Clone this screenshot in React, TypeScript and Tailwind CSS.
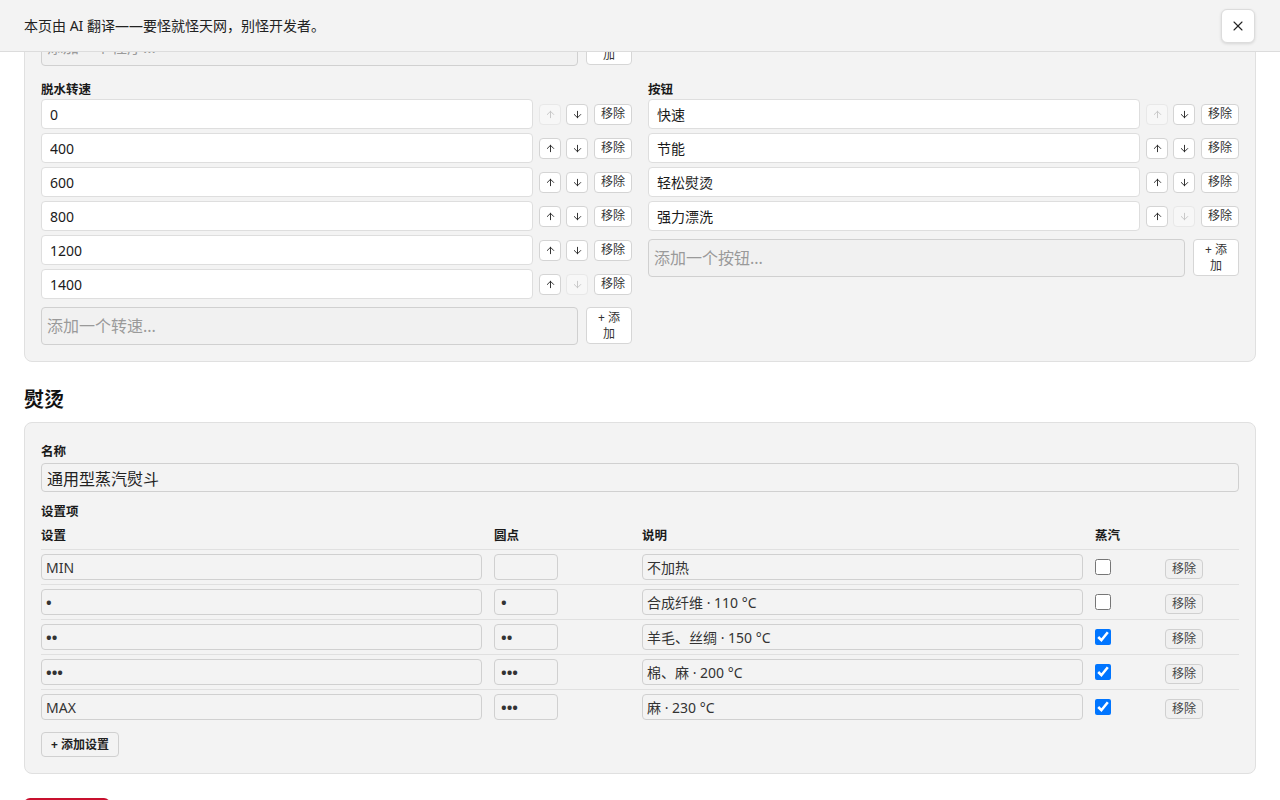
import { ArrowDown, ArrowUp, X } from "lucide-react";

const spins = ["0", "400", "600", "800", "1200", "1400"];
const presets = ["快速", "节能", "轻松熨烫", "强力漂洗"];

type Setting = { name: string; dots: string; desc: string; steam: boolean };

const settings: Setting[] = [
  { name: "MIN", dots: "", desc: "不加热", steam: false },
  { name: "•", dots: "•", desc: "合成纤维 · 110 °C", steam: false },
  { name: "••", dots: "••", desc: "羊毛、丝绸 · 150 °C", steam: true },
  { name: "•••", dots: "•••", desc: "棉、麻 · 200 °C", steam: true },
  { name: "MAX", dots: "•••", desc: "麻 · 230 °C", steam: true },
];

function MoveButton({ dir, disabled }: { dir: "up" | "down"; disabled?: boolean }) {
  const Icon = dir === "up" ? ArrowUp : ArrowDown;
  return (
    <button
      disabled={disabled}
      className={
        disabled
          ? "flex h-[21px] w-[22px] items-center justify-center rounded border border-[#e8e8e8] bg-[#f7f7f7] text-[#c4c4c4]"
          : "flex h-[21px] w-[22px] items-center justify-center rounded border border-[#d4d4d4] bg-white text-[#222]"
      }
    >
      <Icon size={11} strokeWidth={2} />
    </button>
  );
}

function ItemRow({ value, first, last }: { value: string; first: boolean; last: boolean }) {
  return (
    <div className="flex h-[30px] items-center">
      <input
        readOnly
        value={value}
        className="h-full min-w-0 flex-1 rounded border border-[#dedede] bg-white px-2 text-[14px] text-[#1a1a1a] outline-none"
      />
      <div className="ml-[6px] flex items-center gap-[5px]">
        <MoveButton dir="up" disabled={first} />
        <MoveButton dir="down" disabled={last} />
      </div>
      <button className="ml-[6px] h-[21px] w-[38px] rounded border border-[#d4d4d4] bg-white text-[12px] leading-none text-[#333]">
        移除
      </button>
    </div>
  );
}

function AddRow({ placeholder }: { placeholder: string }) {
  return (
    <div className="flex items-start gap-2">
      <input
        placeholder={placeholder}
        className="h-[38px] min-w-0 flex-1 rounded border border-[#d0d0d0] bg-[#f1f1f1] px-[5px] text-[16px] text-[#1a1a1a] outline-none placeholder:text-[#9a9a9a]"
      />
      <button className="h-[37px] w-[46px] rounded border border-[#d6d6d6] bg-white px-[7px] text-[12px] leading-4 text-[#333]">
        + 添加
      </button>
    </div>
  );
}

function ListEditor({ title, items, placeholder }: { title: string; items: string[]; placeholder: string }) {
  return (
    <div>
      <div className="mb-px text-[12.5px] font-bold leading-4 text-[#1a1a1a]">{title}</div>
      <div className="flex flex-col gap-1">
        {items.map((v, i) => (
          <ItemRow key={v} value={v} first={i === 0} last={i === items.length - 1} />
        ))}
      </div>
      <div className="mt-2">
        <AddRow placeholder={placeholder} />
      </div>
    </div>
  );
}

function isDots(v: string) {
  return v.length > 0 && /^•+$/.test(v);
}

function SettingsTable() {
  const cols = "grid grid-cols-[453px_148px_453px_70px_74px]";
  return (
    <div className="mt-[8px]">
      <div className={`${cols} border-b border-[#e0e0e0] pb-[5px] text-[12.5px] font-bold leading-4 text-[#1a1a1a]`}>
        <div>设置</div>
        <div>圆点</div>
        <div>说明</div>
        <div>蒸汽</div>
        <div />
      </div>
      {settings.map((s, i) => (
        <div
          key={i}
          className={`${cols} items-center border-b border-[#e0e0e0] py-1 last:border-b-0`}
        >
          <div className="pr-3">
            <input
              readOnly
              value={s.name}
              className={
                isDots(s.name)
                  ? "h-[26px] w-full rounded border border-[#d0d0d0] bg-transparent px-[4px] text-[15px] font-bold text-[#333] outline-none"
                  : "h-[26px] w-full rounded border border-[#d0d0d0] bg-transparent px-[4px] text-[14px] text-[#333] outline-none"
              }
            />
          </div>
          <div>
            <input
              readOnly
              value={s.dots}
              className="h-[26px] w-16 rounded border border-[#d0d0d0] bg-transparent px-[6px] text-[15px] font-bold text-[#333] outline-none"
            />
          </div>
          <div className="pr-3">
            <input
              readOnly
              value={s.desc}
              className="h-[26px] w-full rounded border border-[#d0d0d0] bg-transparent px-[4px] text-[14px] text-[#333] outline-none"
            />
          </div>
          <div className="flex items-center">
            <input type="checkbox" defaultChecked={s.steam} className="m-0 h-4 w-4" />
          </div>
          <div>
            <button className="h-5 w-[38px] rounded border border-[#d0d0d0] bg-[#f0f0f0] text-[12px] leading-none text-[#444]">
              移除
            </button>
          </div>
        </div>
      ))}
    </div>
  );
}

export default function App() {
  return (
    <div className="min-h-screen bg-white font-['Noto_Sans','Noto_Sans_CJK_SC',sans-serif] text-[#1a1a1a]">
      {/* translation notice bar, pinned over the page */}
      <div className="fixed left-0 right-0 top-0 z-10 flex h-[52px] items-center justify-between border-b border-[#dcdcdc] bg-[#f3f3f3] pl-6 pr-[25px]">
        <span className="text-[14px] text-[#222]">本页由 AI 翻译——要怪就怪天网，别怪开发者。</span>
        <button className="flex h-[34px] w-[34px] items-center justify-center rounded-md border border-[#dcdcdc] bg-white shadow-[0_1px_3px_rgba(0,0,0,0.12)]">
          <X size={16} strokeWidth={1.6} className="text-[#222]" />
        </button>
      </div>

      <div className="px-6 pb-10">
        {/* washing machine options */}
        <section className="mt-[11px] rounded-lg border border-[#e0e0e0] bg-[#f3f3f3] px-4 pb-4 pt-4">
          <div className="grid grid-cols-2 gap-x-4 gap-y-4">
            <AddRow placeholder="添加一个程序..." />
            <div />
            <ListEditor title="脱水转速" items={spins} placeholder="添加一个转速..." />
            <ListEditor title="按钮" items={presets} placeholder="添加一个按钮..." />
          </div>
        </section>

        <h2 className="mb-[8px] mt-6 text-[20px] font-bold leading-7 text-[#111]">熨烫</h2>

        <section className="rounded-lg border border-[#e0e0e0] bg-[#f3f3f3] px-4 pb-4 pt-5">
          <div className="mb-[3px] pt-px text-[12.5px] font-bold leading-4">名称</div>
          <input
            readOnly
            value="通用型蒸汽熨斗"
            className="h-[29px] w-full rounded border border-[#d0d0d0] bg-transparent px-[5px] text-[16px] text-[#222] outline-none"
          />
          <div className="mt-3 text-[12.5px] font-bold leading-4">设置项</div>
          <SettingsTable />
          <button className="mt-2 h-[25px] rounded border border-[#d0d0d0] bg-[#f3f3f3] px-[9px] text-[12px] font-bold leading-none text-[#222]">
            + 添加设置
          </button>
        </section>

        <button className="mt-6 h-9 w-[86px] rounded-md bg-[#c8102e] text-[14px] text-white">删除设备</button>
      </div>
    </div>
  );
}
